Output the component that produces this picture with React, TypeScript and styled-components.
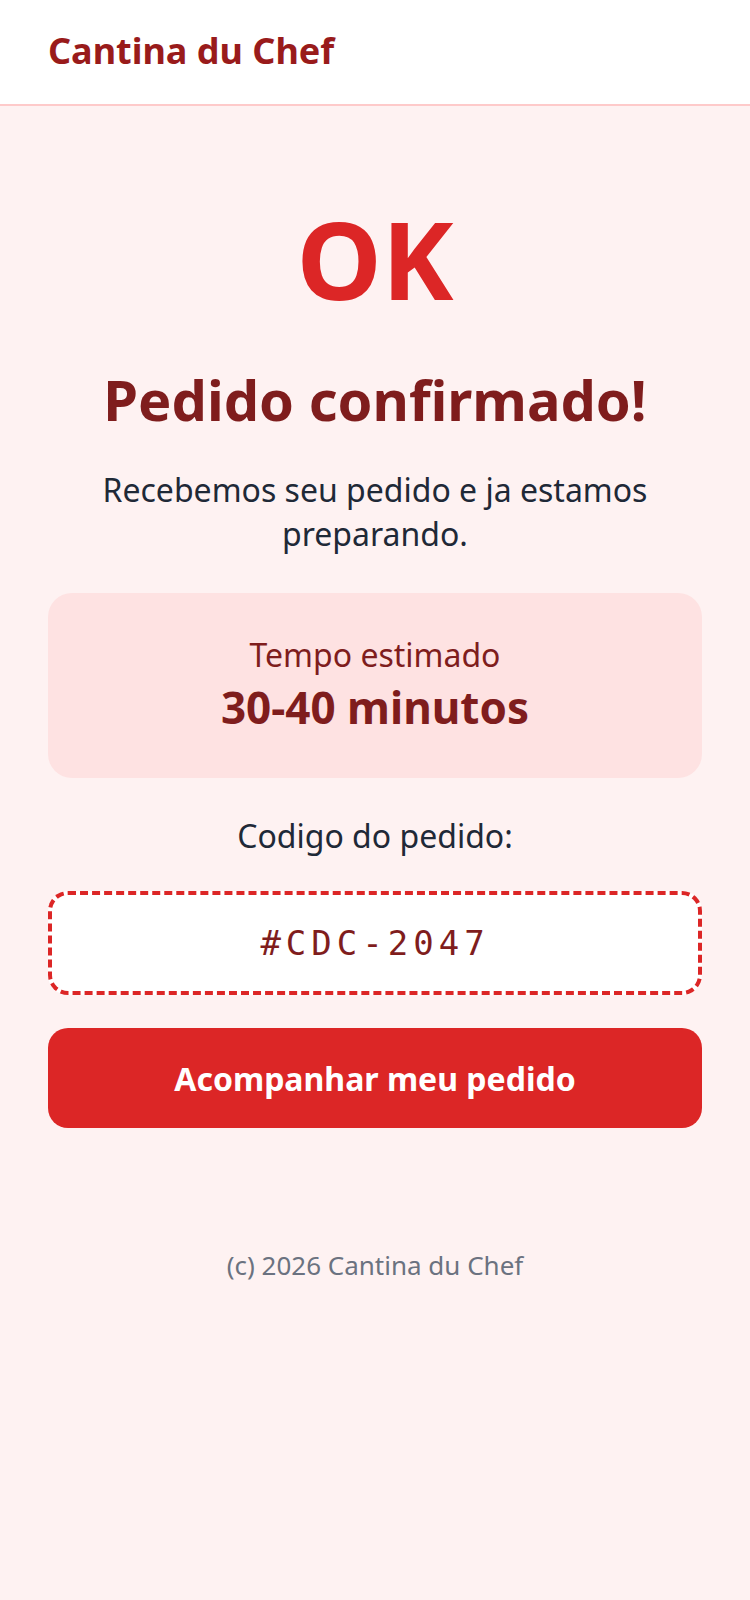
import styled, { createGlobalStyle } from "styled-components";

const GlobalStyle = createGlobalStyle`
  * {
    box-sizing: border-box;
  }
  body {
    margin: 0;
    background: #fef2f2;
    font-family: "Noto Sans", "Open Sans", sans-serif;
  }
`;

const App = () => {
  return (
    <>
      <GlobalStyle />
      <Page>
        <Header>
          <Brand>Cantina du Chef</Brand>
        </Header>
        <Main>
          <BigMark>OK</BigMark>
          <Title>Pedido confirmado!</Title>
          <Lead>Recebemos seu pedido e ja estamos preparando.</Lead>
          <EtaCard>
            <EtaLabel>Tempo estimado</EtaLabel>
            <EtaValue>30-40 minutos</EtaValue>
          </EtaCard>
          <CodeLabel>Codigo do pedido:</CodeLabel>
          <CodeBox>#CDC-2047</CodeBox>
          <TrackButton>Acompanhar meu pedido</TrackButton>
        </Main>
        <Footer>(c) 2026 Cantina du Chef</Footer>
      </Page>
    </>
  );
};

export default App;

// styled-components
const Page = styled.div`
  min-height: 100vh;
  display: flex;
  flex-direction: column;
  background: #fef2f2;
`;

const Header = styled.header`
  display: flex;
  align-items: center;
  height: 106px;
  padding: 0 48px 4px;
  background: #ffffff;
  border-bottom: 2px solid #fecaca;
`;

const Brand = styled.span`
  font-size: 36px;
  font-weight: 700;
  color: #991b1b;
`;

const Main = styled.main`
  display: flex;
  flex-direction: column;
  align-items: stretch;
  padding: 99px 48px 0;
  text-align: center;
`;

const BigMark = styled.div`
  font-size: 108px;
  line-height: 1;
  font-weight: 700;
  color: #dc2626;
`;

const Title = styled.h1`
  margin: 53px 0 0;
  font-size: 56px;
  line-height: 1.2;
  font-weight: 700;
  color: #7f1d1d;
`;

const Lead = styled.p`
  margin: 35px 0 0;
  font-size: 32px;
  line-height: 44px;
  color: #1f2937;
`;

const EtaCard = styled.section`
  display: flex;
  flex-direction: column;
  align-items: center;
  margin-top: 37px;
  padding: 39px 24px 41px;
  border-radius: 24px;
  background: #fee2e2;
`;

const EtaLabel = styled.span`
  font-size: 32px;
  line-height: 45px;
  color: #7f1d1d;
`;

const EtaValue = styled.strong`
  font-size: 44px;
  line-height: 60px;
  font-weight: 700;
  color: #7f1d1d;
`;

const CodeLabel = styled.p`
  margin: 35px 0 0;
  font-size: 32px;
  line-height: 45px;
  color: #1f2937;
`;

const CodeBox = styled.div`
  display: flex;
  align-items: center;
  justify-content: center;
  height: 104px;
  margin-top: 33px;
  border: 4px dashed #dc2626;
  border-radius: 20px;
  background: #ffffff;
  font-family: "DejaVu Sans Mono", monospace;
  font-size: 34px;
  letter-spacing: 5px;
  color: #7f1d1d;
`;

const TrackButton = styled.button`
  height: 100px;
  margin-top: 33px;
  border: none;
  border-radius: 20px;
  background: #dc2626;
  color: #ffffff;
  font-family: inherit;
  font-size: 32px;
  font-weight: 700;
  cursor: pointer;
`;

const Footer = styled.footer`
  padding: 118px 48px 0;
  text-align: center;
  font-size: 26px;
  line-height: 39px;
  color: #6b7280;
`;
